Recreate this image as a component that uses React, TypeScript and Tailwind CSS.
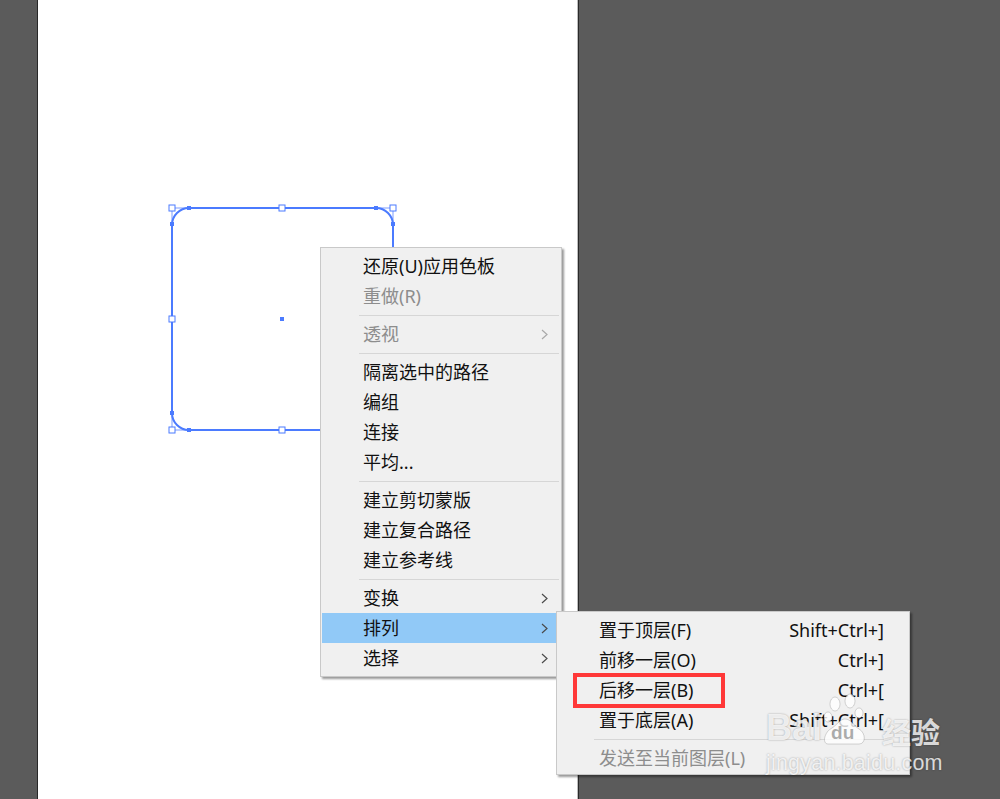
import React from "react";

type Item =
  | { kind: "sep" }
  | { kind: "item"; label: string; disabled?: boolean; sub?: boolean; active?: boolean; shortcut?: string };

const font = { fontFamily: '"Noto Sans", "Noto Sans CJK SC", sans-serif' };

const mainItems: Item[] = [
  { kind: "item", label: "还原(U)应用色板" },
  { kind: "item", label: "重做(R)", disabled: true },
  { kind: "sep" },
  { kind: "item", label: "透视", disabled: true, sub: true },
  { kind: "sep" },
  { kind: "item", label: "隔离选中的路径" },
  { kind: "item", label: "编组" },
  { kind: "item", label: "连接" },
  { kind: "item", label: "平均..." },
  { kind: "sep" },
  { kind: "item", label: "建立剪切蒙版" },
  { kind: "item", label: "建立复合路径" },
  { kind: "item", label: "建立参考线" },
  { kind: "sep" },
  { kind: "item", label: "变换", sub: true },
  { kind: "item", label: "排列", sub: true, active: true },
  { kind: "item", label: "选择", sub: true },
];

const arrangeItems: Item[] = [
  { kind: "item", label: "置于顶层(F)", shortcut: "Shift+Ctrl+]" },
  { kind: "item", label: "前移一层(O)", shortcut: "Ctrl+]" },
  { kind: "item", label: "后移一层(B)", shortcut: "Ctrl+[" },
  { kind: "item", label: "置于底层(A)", shortcut: "Shift+Ctrl+[" },
  { kind: "sep" },
  { kind: "item", label: "发送至当前图层(L)", disabled: true },
];

function Chevron({ disabled }: { disabled?: boolean }) {
  return (
    <svg width="7" height="11" viewBox="0 0 7 11" className="shrink-0">
      <path d="M1 1 L6 5.5 L1 10" fill="none" stroke={disabled ? "#a8a8a8" : "#4a4a4a"} strokeWidth="1.2" />
    </svg>
  );
}

function MenuRows({ items, sepIndent }: { items: Item[]; sepIndent: string }) {
  return (
    <>
      {items.map((it, i) =>
        it.kind === "sep" ? (
          <div key={i} className={`h-[8px] flex items-center ${sepIndent} pr-[2px]`}>
            <div className="h-px w-full bg-[#d6d6d6]" />
          </div>
        ) : (
          <div
            key={i}
            className={`h-[30px] ml-px flex items-center pl-[41px] pr-[13px] text-[18px] leading-[30px] ${
              it.active ? "bg-[#91c9f7]" : ""
            } ${it.disabled ? "text-[#8d8d8d]" : "text-[#111]"}`}
          >
            <span className="whitespace-nowrap">{it.label}</span>
            <span className="flex-1" />
            {it.shortcut && <span className="whitespace-nowrap">{it.shortcut}</span>}
            {it.sub && <Chevron disabled={it.disabled} />}
          </div>
        )
      )}
    </>
  );
}

function Handle({ x, y, filled }: { x: number; y: number; filled?: boolean }) {
  return filled ? (
    <rect x={x - 2} y={y - 2} width="4" height="4" fill="#4b7bff" />
  ) : (
    <rect x={x - 3} y={y - 3} width="6" height="6" fill="#fff" stroke="#4b7bff" strokeWidth="1" />
  );
}

function Shape() {
  // origin of this svg sits at page (165, 200)
  return (
    <svg className="absolute left-[165px] top-[200px]" width="240" height="240" viewBox="0 0 240 240">
      <rect x="7" y="8" width="221" height="222" fill="none" stroke="#7c9cff" strokeWidth="1" />
      <rect x="7" y="8" width="221" height="222" rx="17" fill="none" stroke="#4b7bff" strokeWidth="2" />
      <Handle x={24} y={8} filled />
      <Handle x={211} y={8} filled />
      <Handle x={7} y={24} filled />
      <Handle x={228} y={24} filled />
      <Handle x={7} y={213} filled />
      <Handle x={24} y={230} filled />
      <Handle x={211} y={230} filled />
      <Handle x={117} y={119} filled />
      <Handle x={7} y={8} />
      <Handle x={228} y={8} />
      <Handle x={7} y={230} />
      <Handle x={228} y={230} />
      <Handle x={117} y={8} />
      <Handle x={117} y={230} />
      <Handle x={7} y={119} />
    </svg>
  );
}

function Watermark() {
  const shadow = "[text-shadow:0_0_2px_rgba(0,0,0,0.35)]";
  return (
    <div className="absolute left-[766px] top-[690px] flex flex-col text-white/80 pointer-events-none" style={{ fontFamily: '"Liberation Sans", "Noto Sans CJK SC", sans-serif' }}>
      <div className="flex items-end h-[57px]">
        <span className={`text-[36px] font-bold leading-none mb-[1px] ${shadow}`}>Bai</span>
        <div className="relative w-[46px] h-[55px]">
          <svg width="46" height="55" viewBox="0 0 46 55" className="absolute left-0 top-0">
            <g fill="rgba(255,255,255,0.8)" stroke="rgba(0,0,0,0.2)" strokeWidth="0.8">
              <ellipse cx="13" cy="12" rx="5" ry="7" />
              <ellipse cx="28" cy="9" rx="5" ry="7" />
              <ellipse cx="6" cy="25" rx="4" ry="5" />
              <ellipse cx="37" cy="21" rx="4" ry="5" />
              <path d="M6 52 C0 52 2 40 10 36 C15 33 18 27 23 27 C29 27 32 34 37 37 C44 41 44 52 37 52 Z" />
            </g>
          </svg>
          <span className="absolute left-[9px] top-[31px] text-[19px] font-bold leading-none text-[#5b5b5b]/50">du</span>
        </div>
        <span className={`ml-[14px] text-[29px] font-bold leading-none mb-[1px] ${shadow}`} style={{ fontFamily: '"Noto Sans CJK SC", sans-serif' }}>
          经验
        </span>
      </div>
      <span className={`text-[21.5px] leading-none mt-[6px] tracking-[0.2px] ${shadow}`}>jingyan.baidu.com</span>
    </div>
  );
}

export default function App() {
  return (
    <div className="relative w-[1000px] h-[799px] bg-[#5b5b5b] overflow-hidden flex" style={font}>
      <div className="w-[37px] shrink-0" />
      <div className="w-px bg-[#282828] shrink-0" />
      <div className="w-[539px] bg-white shrink-0" />
      <div className="w-px bg-[#bdbdbd] shrink-0" />
      <div className="w-px bg-[#2a2a2a] shrink-0" />

      <Shape />

      {/* context menu */}
      <div className="absolute left-[320px] top-[247px] w-[242px] h-[430px] bg-[#f0f0f0] border border-[#c9c9c9] pt-[3px] shadow-[2px_2px_2px_rgba(0,0,0,0.4)]">
        <MenuRows items={mainItems} sepIndent="pl-[38px]" />
      </div>

      {/* arrange submenu */}
      <div className="absolute left-[556px] top-[611px] w-[354px] h-[164px] bg-[#f0f0f0] border border-[#c9c9c9] pt-[3px] shadow-[2px_2px_2px_rgba(0,0,0,0.4)]">
        <div className="[&>div]:pr-[25px]">
          <MenuRows items={arrangeItems} sepIndent="pl-[37px]" />
        </div>
      </div>

      {/* highlight box */}
      <div className="absolute left-[573px] top-[673px] w-[152px] h-[35px] border-[4px] border-[#ff3838]" />

      <Watermark />
    </div>
  );
}
